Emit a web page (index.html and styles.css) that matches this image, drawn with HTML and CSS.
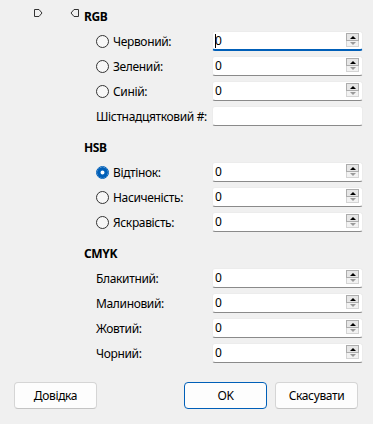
FILE: index.html
```html
<!DOCTYPE html>
<html lang="uk">
<head>
  <meta charset="UTF-8" />
  <meta name="viewport" content="width=device-width, initial-scale=1.0" />
  <title>Колір</title>
  <link rel="stylesheet" href="styles.css">
</head>
<body>

<div class="dialog">
  <div class="content">
    <div class="marks">
      <svg class="mark" width="9" height="8" viewBox="0 0 9 8"><path d="M0.5 0.5 H5 L8 4 L5 7.5 H0.5 Z" fill="none" stroke="#333" stroke-width="1"/></svg>
      <svg class="mark" width="9" height="8" viewBox="0 0 9 8"><path d="M8.5 0.5 H4 L1 4 L4 7.5 H8.5 Z" fill="none" stroke="#333" stroke-width="1"/></svg>
    </div>

    <div class="groups">
      <!-- RGB -->
      <section class="group">
        <h2>RGB</h2>
        <div class="rows">
          <div class="row">
            <span class="label"><span class="radio"></span>Червоний:</span>
            <div class="field focused"><span class="value"><span class="caret"></span>0</span><span class="spin"><i class="up"></i><i class="down"></i></span></div>
          </div>
          <div class="row">
            <span class="label"><span class="radio"></span>Зелений:</span>
            <div class="field"><span class="value">0</span><span class="spin"><i class="up"></i><i class="down"></i></span></div>
          </div>
          <div class="row">
            <span class="label"><span class="radio"></span>Синій:</span>
            <div class="field"><span class="value">0</span><span class="spin"><i class="up"></i><i class="down"></i></span></div>
          </div>
          <div class="row">
            <span class="label">Шістнадцятковий #:</span>
            <div class="field"><span class="value"></span></div>
          </div>
        </div>
      </section>

      <!-- HSB -->
      <section class="group">
        <h2>HSB</h2>
        <div class="rows">
          <div class="row">
            <span class="label"><span class="radio checked"></span>Відтінок:</span>
            <div class="field"><span class="value">0</span><span class="spin"><i class="up"></i><i class="down"></i></span></div>
          </div>
          <div class="row">
            <span class="label"><span class="radio"></span>Насиченість:</span>
            <div class="field"><span class="value">0</span><span class="spin"><i class="up"></i><i class="down"></i></span></div>
          </div>
          <div class="row">
            <span class="label"><span class="radio"></span>Яскравість:</span>
            <div class="field"><span class="value">0</span><span class="spin"><i class="up"></i><i class="down"></i></span></div>
          </div>
        </div>
      </section>

      <!-- CMYK -->
      <section class="group">
        <h2>CMYK</h2>
        <div class="rows">
          <div class="row">
            <span class="label">Блакитний:</span>
            <div class="field"><span class="value">0</span><span class="spin"><i class="up"></i><i class="down"></i></span></div>
          </div>
          <div class="row">
            <span class="label">Малиновий:</span>
            <div class="field"><span class="value">0</span><span class="spin"><i class="up"></i><i class="down"></i></span></div>
          </div>
          <div class="row">
            <span class="label">Жовтий:</span>
            <div class="field"><span class="value">0</span><span class="spin"><i class="up"></i><i class="down"></i></span></div>
          </div>
          <div class="row">
            <span class="label">Чорний:</span>
            <div class="field"><span class="value">0</span><span class="spin"><i class="up"></i><i class="down"></i></span></div>
          </div>
        </div>
      </section>
    </div>
  </div>

  <div class="buttons">
    <button class="btn">Довідка</button>
    <div class="btn-group">
      <button class="btn default">OK</button>
      <button class="btn">Скасувати</button>
    </div>
  </div>
</div>

</body>
</html>
```

FILE: styles.css
```css
body {
  margin: 0;
  background: #f0f0f0;
  color: #000;
  font-family: 'Noto Sans', 'Open Sans', sans-serif;
  font-size: 12px;
  letter-spacing: -0.35px;
}
.dialog {
  width: 373px;
  height: 424px;
  display: flex;
  flex-direction: column;
}
.content {
  display: flex;
  padding-top: 9px;
}
.marks {
  width: 84px;
  display: flex;
  gap: 27px;
  padding-left: 34px;
  box-sizing: border-box;
  align-items: flex-start;
}
.mark {
  display: block;
}
.groups {
  display: flex;
  flex-direction: column;
  gap: 14px;
}
.group h2 {
  margin: 0;
  font-size: 12px;
  font-weight: 700;
  line-height: 16px;
  height: 16px;
}
.rows {
  display: flex;
  flex-direction: column;
  gap: 5px;
  margin-top: 6px;
  padding-left: 12px;
}
.row {
  display: grid;
  grid-template-columns: 116px 151px;
  align-items: center;
  height: 20px;
}
.label {
  display: flex;
  align-items: center;
  gap: 4px;
  white-space: nowrap;
}
.radio {
  width: 11px;
  height: 11px;
  border: 1px solid #333;
  border-radius: 50%;
  background: #f7f7f7;
  flex: none;
}
.radio.checked {
  border-color: #005fb8;
  background: #fff;
  box-shadow: inset 0 0 0 3.5px #005fb8;
}

/* text boxes */
.field {
  height: 20px;
  box-sizing: border-box;
  background: #fff;
  border: 1px solid #ececec;
  border-bottom-color: #8a8a8a;
  border-radius: 3px;
  display: flex;
  align-items: flex-start;
}
.field.focused {
  border-bottom: 2px solid #005fb8;
}
.value {
  flex: 1;
  padding-left: 2px;
  line-height: 18px;
}
.caret {
  display: inline-block;
  width: 1px;
  height: 14px;
  background: #000;
  vertical-align: -3px;
  margin-right: -1px;
}
.spin {
  display: flex;
  flex-direction: column;
  margin: 1px 3px 0 0;
}
.spin i {
  width: 11px;
  display: flex;
  align-items: center;
  justify-content: center;
  border: 1px solid #adadad;
  background: #e6e6e6;
}
.spin .up {
  height: 6px;
}
.spin .down {
  height: 5px;
  border-color: #d4d4d4;
  border-top: none;
  background: #f2f2f2;
}
.spin .up::after {
  content: '';
  border-left: 3px solid transparent;
  border-right: 3px solid transparent;
  border-bottom: 3px solid #000;
}
.spin .down::after {
  content: '';
  border-left: 3px solid transparent;
  border-right: 3px solid transparent;
  border-top: 3px solid #9a9a9a;
}

/* bottom buttons */
.buttons {
  display: flex;
  justify-content: space-between;
  padding: 0 15px 0 14px;
  margin-top: 19px;
}
.btn-group {
  display: flex;
  gap: 8px;
}
.btn {
  width: 83px;
  height: 27px;
  font-family: inherit;
  font-size: 12px;
  letter-spacing: inherit;
  color: #000;
  background: #fdfdfd;
  border: 1px solid #d5d5d5;
  border-bottom-color: #c4c4c4;
  border-radius: 4px;
  padding: 0;
}
.btn.default {
  border-color: #005fb8;
}
```
